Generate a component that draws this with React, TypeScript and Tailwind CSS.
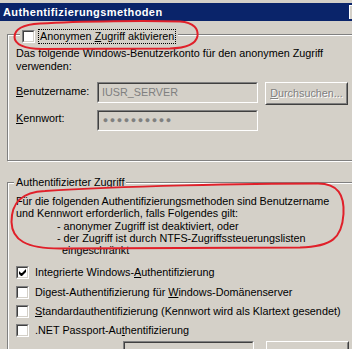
import React from "react";

function Check({ checked = false }: { checked?: boolean }) {
  return (
    <div className="relative h-[13px] w-[13px] shrink-0 border border-t-[#808080] border-l-[#808080] border-b-white border-r-white">
      <div className="h-full w-full border border-t-[#404040] border-l-[#404040] border-b-[#d4d0c8] border-r-[#d4d0c8] bg-white" />
      {checked && (
        <svg className="absolute left-[-1px] top-[-1px]" width="13" height="13" viewBox="0 0 13 13">
          <path d="M3 5 L5 7 L6 7 L10 3 L10 6 L6 10 L5 10 L3 8 Z" fill="#000" />
        </svg>
      )}
    </div>
  );
}

function Sunken({ className = "", children }: { className?: string; children?: React.ReactNode }) {
  return (
    <div className={`border border-t-[#808080] border-l-[#808080] border-b-white border-r-white ${className}`}>
      <div className="flex h-full w-full items-center border border-t-[#404040] border-l-[#404040] border-b-[#d4d0c8] border-r-[#d4d0c8] bg-[#d4d0c8] pl-[3px]">
        {children}
      </div>
    </div>
  );
}

function Raised({ className = "", children }: { className?: string; children?: React.ReactNode }) {
  return (
    <div className={`border border-t-white border-l-white border-b-[#404040] border-r-[#404040] ${className}`}>
      <div className="flex h-full w-full items-center justify-center border border-t-[#d4d0c8] border-l-[#d4d0c8] border-b-[#808080] border-r-[#808080] bg-[#d4d0c8]">
        {children}
      </div>
    </div>
  );
}

export default function App() {
  return (
    <div className="relative h-[349px] w-[352px] overflow-hidden bg-[#d4d0c8] font-['Liberation_Sans',Arial,sans-serif] text-[10.8px] leading-[13px] text-black">
      <div className="h-[3px]" />
      <div className="flex h-[18px] items-center bg-[#0a246a]">
        <span className="pl-[3px] text-[11px] font-bold tracking-[0.4px] text-white">Authentifizierungsmethoden</span>
        <div className="ml-auto h-[14px] w-[3px] border-l border-t border-white bg-[#d4d0c8]" />
      </div>

      {/* Group 1 */}
      <div className="relative ml-[7px] mt-[13px] h-[127px] w-[360px] border border-[#808080] shadow-[inset_1px_1px_0_#fff,1px_1px_0_#fff]">
        <div className="absolute left-[12px] top-[-6px] flex items-center bg-[#d4d0c8] px-[2px]">
          <Check />
          <span className="ml-[3px] border border-dotted border-black px-[1px]">
            Anonymen <span className="underline">Z</span>ugriff aktivieren
          </span>
        </div>
        <div className="pl-[8px] pt-[12px]">
          <p className="w-[335px]">
            Das folgende Windows-Benutzerkonto für den anonymen Zugriff
            <br />
            verwenden:
          </p>
          <div className="mt-[9px] flex items-start">
            <div className="w-[81px] pt-[3px]">
              <span className="underline">B</span>enutzername:
            </div>
            <Sunken className="h-[21px] w-[161px]">
              <span className="text-[#808080]">IUSR_SERVER</span>
            </Sunken>
            <Raised className="ml-[7px] h-[23px] w-[83px]">
              <span className="text-[#808080] [text-shadow:1px_1px_0_#fff]">
                <span className="underline">D</span>urchsuchen...
              </span>
            </Raised>
          </div>
          <div className="mt-[5px] flex items-start">
            <div className="w-[81px] pt-[2px]">
              <span className="underline">K</span>ennwort:
            </div>
            <Sunken className="h-[21px] w-[161px]">
              <span className="flex text-[9px] leading-[9px] text-[#808080]">
                {Array.from({ length: 10 }).map((_, i) => (
                  <span key={i} className="inline-block w-[7px] text-center">●</span>
                ))}
              </span>
            </Sunken>
          </div>
        </div>
      </div>

      {/* Group 2 */}
      <div className="relative ml-[7px] mt-[21px] h-[220px] w-[360px] border border-[#808080] shadow-[inset_1px_1px_0_#fff,1px_1px_0_#fff]">
        <div className="absolute left-[6px] top-[-7px] bg-[#d4d0c8] px-[2px]">Authentifizierter Zugriff</div>
        <div className="pl-[8px] pt-[12px]">
          <div className="w-[340px] leading-[12.3px]">
            <div className="tracking-[-0.05px]">Für die folgenden Authentifizierungsmethoden sind Benutzername</div>
            <div>und Kennwort erforderlich, falls Folgendes gilt:</div>
            <div className="pl-[41px]">- anonymer Zugriff ist deaktiviert, oder</div>
            <div className="pl-[41px]">- der Zugriff ist durch NTFS-Zugriffssteuerungslisten</div>
            <div className="pl-[46px]">eingeschränkt</div>
          </div>
          <div className="mt-[10px] flex flex-col">
            <div className="flex h-[13px] items-center gap-[6px]">
              <Check checked />
              <span>
                Integrierte Windows-<span className="underline">A</span>uthentifizierung
              </span>
            </div>
            <div className="mt-[7px] flex h-[13px] items-center gap-[6px]">
              <Check />
              <span>
                Digest-Authentifizierung für <span className="underline">W</span>indows-Domänenserver
              </span>
            </div>
            <div className="mt-[6px] flex h-[13px] items-center gap-[6px]">
              <Check />
              <span className="whitespace-nowrap">
                <span className="underline">S</span>tandardauthentifizierung (Kennwort wird als Klartext gesendet)
              </span>
            </div>
            <div className="mt-[6px] flex h-[13px] items-center gap-[6px]">
              <Check />
              <span>
                .NET Passport-Au<span className="underline">t</span>hentifizierung
              </span>
            </div>
          </div>
          <div className="mt-[4px] flex gap-[12px] pl-[107px]">
            <Sunken className="h-[21px] w-[131px]" />
            <Raised className="h-[23px] w-[83px]" />
          </div>
        </div>
      </div>

      {/* red annotations */}
      <svg className="pointer-events-none absolute left-0 top-0" width="352" height="349" viewBox="0 0 352 349">
        <path
          d="M40 23.5 C80 21, 150 20.5, 180 21.5 C194 22.5, 198.5 29, 197.5 36 C196 44, 187 48, 170 48.5 L42 49 C24 49, 14.5 44, 14.5 37 C14.5 29, 23 24.5, 40 23.5 Z"
          fill="none"
          stroke="#e0202a"
          strokeWidth="2"
        />
        <path
          d="M45 191 C120 186, 250 183.5, 318 183.5 C338 183.5, 344.5 195, 343.5 214 C342 238, 332 246.5, 300 247.5 L60 248.5 C26 248.5, 12 240, 11.5 222 C11.5 203, 21 192, 45 191 Z"
          fill="none"
          stroke="#e0202a"
          strokeWidth="2"
        />
      </svg>
    </div>
  );
}
